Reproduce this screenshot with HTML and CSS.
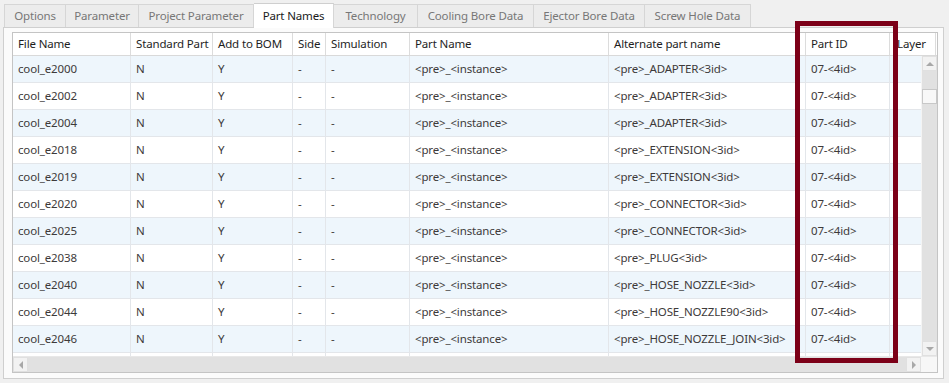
FILE: index.html
```html
<!DOCTYPE html>
<html>
<head>
    <meta charset="UTF-8">
    <title>Part Names</title>
    <link rel="stylesheet" href="styles.css">
</head>
<body>
    <div class="window">
        <div class="tabs">
            <div class="tab" style="width: 62px">Options</div>
            <div class="tab" style="width: 73px">Parameter</div>
            <div class="tab" style="width: 115px">Project Parameter</div>
            <div class="tab active" style="width: 80px">Part Names</div>
            <div class="tab" style="width: 84px">Technology</div>
            <div class="tab" style="width: 116px">Cooling Bore Data</div>
            <div class="tab" style="width: 111px">Ejector Bore Data</div>
            <div class="tab" style="width: 106px">Screw Hole Data</div>
        </div>

        <div class="panel">
            <div class="grid">
                <div class="row head">
                    <div class="c c1">File Name</div>
                    <div class="c c2">Standard Part</div>
                    <div class="c c3">Add to BOM</div>
                    <div class="c c4">Side</div>
                    <div class="c c5">Simulation</div>
                    <div class="c c6">Part Name</div>
                    <div class="c c7">Alternate part name</div>
                    <div class="c c8">Part ID</div>
                    <div class="c c9 last">Layer</div>
                </div>

                <div class="body">
                    <div class="rows" id="rows"></div>
                    <div class="vscroll">
                        <div class="arrow up"></div>
                        <div class="track">
                            <div class="thumb"></div>
                        </div>
                        <div class="arrow down"></div>
                    </div>
                </div>

                <div class="hscroll-row">
                    <div class="hscroll">
                        <div class="arrow left"></div>
                        <div class="htrack"></div>
                        <div class="arrow right"></div>
                    </div>
                    <div class="corner"></div>
                </div>
            </div>
        </div>

        <!-- markierung um die Part ID spalte -->
        <div class="highlight"></div>
    </div>

    <script>
        const parts = [
            ['cool_e2000', '<pre>_ADAPTER<3id>'],
            ['cool_e2002', '<pre>_ADAPTER<3id>'],
            ['cool_e2004', '<pre>_ADAPTER<3id>'],
            ['cool_e2018', '<pre>_EXTENSION<3id>'],
            ['cool_e2019', '<pre>_EXTENSION<3id>'],
            ['cool_e2020', '<pre>_CONNECTOR<3id>'],
            ['cool_e2025', '<pre>_CONNECTOR<3id>'],
            ['cool_e2038', '<pre>_PLUG<3id>'],
            ['cool_e2040', '<pre>_HOSE_NOZZLE<3id>'],
            ['cool_e2044', '<pre>_HOSE_NOZZLE90<3id>'],
            ['cool_e2046', '<pre>_HOSE_NOZZLE_JOIN<3id>']
        ];

        const rowsEl = document.getElementById('rows');

        parts.forEach(function(p, i) {
            const row = document.createElement('div');
            row.className = 'row' + (i % 2 === 0 ? ' alt' : '');
            const cells = [p[0], 'N', 'Y', '-', '-', '<pre>_<instance>', p[1], '07-<4id>', ''];
            cells.forEach(function(text, j) {
                const c = document.createElement('div');
                c.className = 'c c' + (j + 1);
                c.textContent = text;
                row.appendChild(c);
            });
            rowsEl.appendChild(row);
        });

        // angeschnittene zeile unten
        const extra = document.createElement('div');
        extra.className = 'row';
        for (let j = 0; j < 9; j++) {
            const c = document.createElement('div');
            c.className = 'c c' + (j + 1);
            extra.appendChild(c);
        }
        rowsEl.appendChild(extra);
    </script>
</body>
</html>
```

FILE: styles.css
```css
* {
    box-sizing: border-box;
    margin: 0;
    padding: 0;
}
body {
    font-family: "Noto Sans", "Open Sans", Arial, sans-serif;
    background-color: #f0f0f0;
    color: #3d3a3a;
    width: 949px;
    height: 383px;
    overflow: hidden;
    letter-spacing: -0.15px;
}
.window {
    position: relative;
    padding: 3px 5px 0 3px;
}
.tabs {
    display: flex;
    align-items: flex-end;
    height: 24px;
    padding-left: 1px;
    position: relative;
    z-index: 1;
}
.tab {
    height: 23px;
    line-height: 21px;
    text-align: center;
    font-size: 11.5px;
    color: #777;
    background: #ececec;
    border: 1px solid #d6d6d6;
    border-bottom: none;
    border-left: none;
    white-space: nowrap;
}
.tab:first-child {
    border-left: 1px solid #d6d6d6;
}
.tab.active {
    height: 25px;
    line-height: 23px;
    margin-bottom: -1px;
    background: #fff;
    color: #1a1a1a;
    border-top-color: #cfcfcf;
}
.panel {
    background: #fbfbfb;
    border: 1px solid #cfcfcf;
    height: 352px;
    padding: 4px 5px 5px 8px;
}
.grid {
    border: 1px solid #c4c4c4;
    background: #fff;
    height: 341px;
    display: flex;
    flex-direction: column;
    font-size: 11.5px;
    overflow: hidden;
}
.row {
    display: flex;
    height: 27px;
    line-height: 26px;
    border-bottom: 1px solid #e3e6ea;
    background: #fff;
}
.row.alt {
    background: #eef6fc;
}
.row.head {
    height: 23px;
    line-height: 22px;
    color: #1e1e1e;
    border-bottom: 1px solid #d9d9d9;
    flex-shrink: 0;
}
.c {
    border-right: 1px solid #e3e6ea;
    padding-left: 5px;
    white-space: nowrap;
    overflow: hidden;
    flex-shrink: 0;
}
.head .c {
    border-right-color: #dcdcdc;
}
.c1 { width: 118px; }
.c2 { width: 82px; }
.c3 { width: 80px; }
.c4 { width: 33px; }
.c5 { width: 84px; }
.c6 { width: 199px; }
.c7 { width: 197px; }
.c8 { width: 84px; }
.c9 { width: 31px; border-right: none; }
.head .c9 { width: 46px; padding-left: 7px; border-right: 1px solid #dcdcdc; }
.body {
    display: flex;
    flex: 1;
    min-height: 0;
}
.rows {
    width: 908px;
    overflow: hidden;
}
.vscroll {
    width: 16px;
    display: flex;
    flex-direction: column;
    background: #e1e1e1;
    border-left: 1px solid #f4f4f4;
}
.track {
    flex: 1;
    position: relative;
}
.thumb {
    position: absolute;
    top: 18px;
    left: 0;
    width: 15px;
    height: 15px;
    background: #f8f8f8;
    border: 1px solid #c8c8c8;
}
.arrow {
    width: 15px;
    height: 15px;
    background: #f2f2f2;
    border: 1px solid #e0e0e0;
    position: relative;
    flex-shrink: 0;
}
.arrow::after {
    content: "";
    position: absolute;
    left: 50%;
    top: 50%;
    transform: translate(-50%, -50%);
    border: 4px solid transparent;
}
.arrow.up::after {
    border-bottom: 4px solid #a8a8a8;
    border-top: none;
}
.arrow.down::after {
    border-top: 4px solid #a8a8a8;
    border-bottom: none;
}
.arrow.left::after {
    border-right: 4px solid #a8a8a8;
    border-left: none;
}
.arrow.right::after {
    border-left: 4px solid #a8a8a8;
    border-right: none;
}
.hscroll-row {
    display: flex;
    height: 16px;
    flex-shrink: 0;
    border-top: 1px solid #e8e8e8;
}
.hscroll {
    width: 908px;
    display: flex;
    background: #e1e1e1;
}
.htrack {
    flex: 1;
}
.corner {
    flex: 1;
    background: #f7f7f7;
}
.highlight {
    position: absolute;
    left: 795px;
    top: 21px;
    width: 103px;
    height: 342px;
    border: 5px solid #7c0018;
    z-index: 2;
}
```
